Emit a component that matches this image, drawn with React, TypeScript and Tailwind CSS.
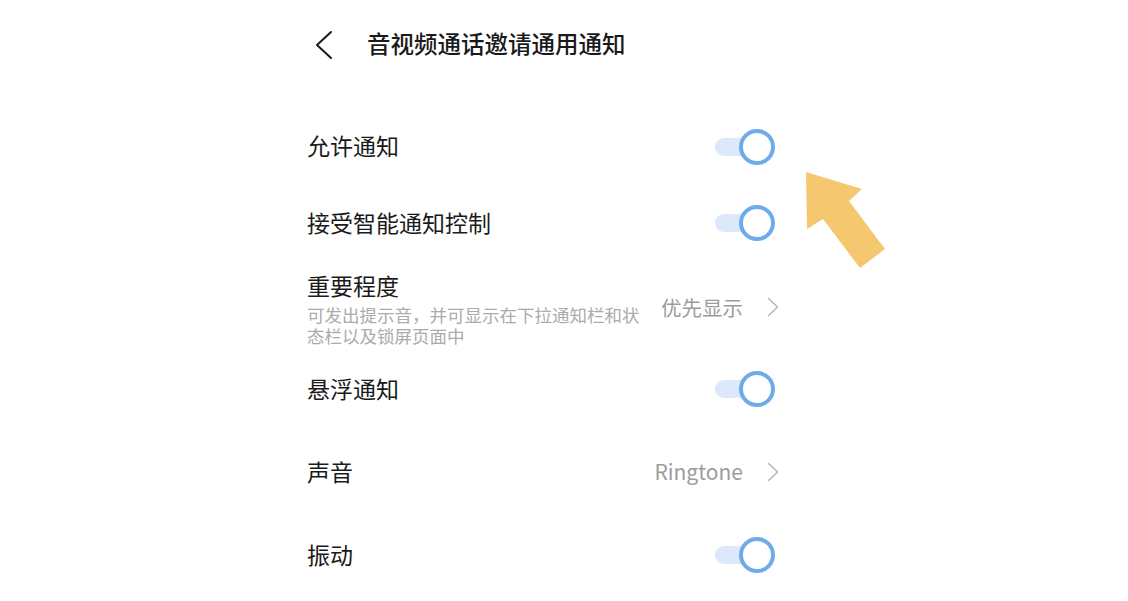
import React from 'react';

const font = { fontFamily: '"Noto Sans CJK SC", "Noto Sans", sans-serif' };

const Toggle: React.FC = () => (
  <div className="relative w-[60px] h-[36px] mr-[4px]">
    <div className="absolute left-0 top-[9px] w-[44px] h-[18px] rounded-full bg-[#dce9fa]" />
    <div className="absolute right-0 top-0 w-[36px] h-[36px] rounded-full border-[4px] border-[#6fabea] bg-white" />
  </div>
);

const Chevron: React.FC = () => (
  <svg width="12" height="20" viewBox="0 0 12 20" fill="none" className="ml-[24px]">
    <path d="M1.5 1.5 L10.5 10 L1.5 18.5" stroke="#b8b8b8" strokeWidth="1.6" strokeLinecap="round" strokeLinejoin="round" />
  </svg>
);

const App: React.FC = () => {
  return (
    <div className="relative w-[1128px] h-[601px] bg-white overflow-hidden" style={font}>
      <div className="ml-[307px] w-[472px] flex flex-col">
        {/* header */}
        <div className="h-[90px] flex items-center">
          <svg width="20" height="30" viewBox="0 0 20 30" fill="none" className="ml-[7px]">
            <path d="M17 2 L3 15 L17 28" stroke="#1a1a1a" strokeWidth="2" strokeLinecap="round" strokeLinejoin="round" />
          </svg>
          <h1 className="ml-[33px] text-[23.5px] font-medium text-[#1a1a1a] -mt-[2px]">音视频通话邀请通用通知</h1>
        </div>

        <div className="h-[19px]" />

        <div className="h-[76px] flex items-center justify-between">
          <span className="text-[23px] text-[#1a1a1a] -mt-[3px]">允许通知</span>
          <Toggle />
        </div>

        <div className="h-[76px] flex items-center justify-between">
          <span className="text-[23px] text-[#1a1a1a] -mt-[2px]">接受智能通知控制</span>
          <Toggle />
        </div>

        <div className="h-[92px] flex items-center justify-between">
          <div className="flex flex-col w-[345px]">
            <span className="text-[23px] leading-[32px] text-[#1a1a1a]">重要程度</span>
            <p className="text-[17.5px] leading-[21px] text-[#ababab] mt-[3px]">可发出提示音，并可显示在下拉通知栏和状态栏以及锁屏页面中</p>
          </div>
          <div className="flex items-center">
            <span className="text-[20.5px] text-[#9c9c9c]">优先显示</span>
            <Chevron />
          </div>
        </div>

        <div className="h-[72px] flex items-center justify-between">
          <span className="text-[23px] text-[#1a1a1a] -mt-[2px]">悬浮通知</span>
          <Toggle />
        </div>

        <div className="h-[94px] flex items-center justify-between">
          <span className="text-[23px] text-[#1a1a1a] -mt-[2px]">声音</span>
          <div className="flex items-center">
            <span className="text-[21px] text-[#9c9c9c]">Ringtone</span>
            <Chevron />
          </div>
        </div>

        <div className="h-[72px] flex items-center justify-between">
          <span className="text-[23px] text-[#1a1a1a] -mt-[2px]">振动</span>
          <Toggle />
        </div>
      </div>

      {/* pointer arrow overlay */}
      <svg className="absolute left-0 top-0" width="1128" height="601" viewBox="0 0 1128 601">
        <polygon points="806,172 862,189 849,201 885,249 860,268 823,219 807,229" fill="#f5c870" />
      </svg>
    </div>
  );
};

export default App;
